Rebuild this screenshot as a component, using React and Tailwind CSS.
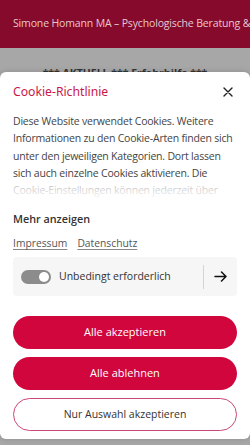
import React from 'react';

const font = { fontFamily: '"Open Sans", "Noto Sans", sans-serif' };

function CloseIcon() {
  return (
    <svg width="10" height="10" viewBox="0 0 10 10" fill="none" stroke="#222" strokeWidth="1.4" strokeLinecap="round">
      <path d="M1 1l8 8M9 1l-8 8" />
    </svg>
  );
}

function ArrowIcon() {
  return (
    <svg width="13" height="11" viewBox="0 0 13 11" fill="none" stroke="#111" strokeWidth="1.5" strokeLinecap="round" strokeLinejoin="round">
      <path d="M1 5.5h11M7.5 1l4.5 4.5L7.5 10" />
    </svg>
  );
}

export default function App() {
  return (
    <div className="relative h-[445px] w-[250px] overflow-hidden bg-[#a7a7a7]" style={font}>
      {/* page behind the dialog */}
      <div className="h-[48px] bg-[#850a2b] flex items-center px-[13px] whitespace-nowrap overflow-hidden">
        <span className="text-[10.5px] tracking-[-0.15px] text-[#e9c7d0]">Simone Homann MA – Psychologische Beratung &amp; Coaching</span>
      </div>
      <div className="pt-[18px] text-center text-[10.5px] font-bold text-[#333] whitespace-nowrap">
        *** AKTUELL *** Erfahrhilfe ***
      </div>

      {/* cookie dialog */}
      <div className="absolute left-0 right-0 top-[72px] bottom-[6px] bg-white rounded-[6px] shadow-[0_0_6px_rgba(0,0,0,0.15)] px-[13px]">
        <div className="flex items-center justify-between pt-[4px] h-[36px]">
          <h2 className="text-[12.2px] text-[#c8174a] leading-[20px]" style={{ fontFamily: '"Noto Sans", "Open Sans", sans-serif' }}>Cookie-Richtlinie</h2>
          <button className="mr-[2px] p-[2px]"><CloseIcon /></button>
        </div>

        <div className="relative mt-[5px] h-[87px] overflow-hidden">
          <p className="text-[10.5px] tracking-[-0.2px] leading-[17.3px] text-[#444]">
            Diese Website verwendet Cookies. Weitere Informationen zu den Cookie-Arten finden sich unter den jeweiligen Kategorien. Dort lassen sich auch einzelne Cookies aktivieren. Die Cookie-Einstellungen können jederzeit über den Link im Fußbereich geändert werden.
          </p>
          <div className="absolute left-0 right-0 bottom-0 h-[18px] bg-gradient-to-b from-white/60 to-white" />
        </div>

        <div className="mt-[10px] text-[10.8px] font-semibold text-[#333] leading-[18px]">Mehr anzeigen</div>

        <div className="mt-[6px] flex gap-[10px] text-[10.3px] text-[#555] leading-[18px]">
          <a className="underline underline-offset-2 decoration-[#888]">Impressum</a>
          <a className="underline underline-offset-2 decoration-[#888]">Datenschutz</a>
        </div>

        <div className="mt-[5px] h-[39px] rounded-[4px] bg-[#f6f6f6] flex items-center pl-[8px]">
          <div className="w-[30px] h-[14px] rounded-full bg-[#8c8c8c] relative shrink-0">
            <div className="absolute right-[2px] top-[2px] w-[10px] h-[10px] rounded-full bg-white" />
          </div>
          <span className="ml-[8px] flex-1 text-[10.5px] text-[#333]">Unbedingt erforderlich</span>
          <div className="w-px h-[24px] bg-[#d4d4d4]" />
          <div className="w-[33px] flex justify-center"><ArrowIcon /></div>
        </div>

        <div className="mt-[20px] flex flex-col gap-[8px]">
          <button className="h-[33px] rounded-full bg-[#d0063d] text-white text-[11px]">Alle akzeptieren</button>
          <button className="h-[33px] rounded-full bg-[#d0063d] text-white text-[11px]">Alle ablehnen</button>
          <button className="h-[33px] rounded-full bg-white border border-[#c9477a] text-[#333] text-[10.5px]">Nur Auswahl akzeptieren</button>
        </div>
      </div>
    </div>
  );
}
